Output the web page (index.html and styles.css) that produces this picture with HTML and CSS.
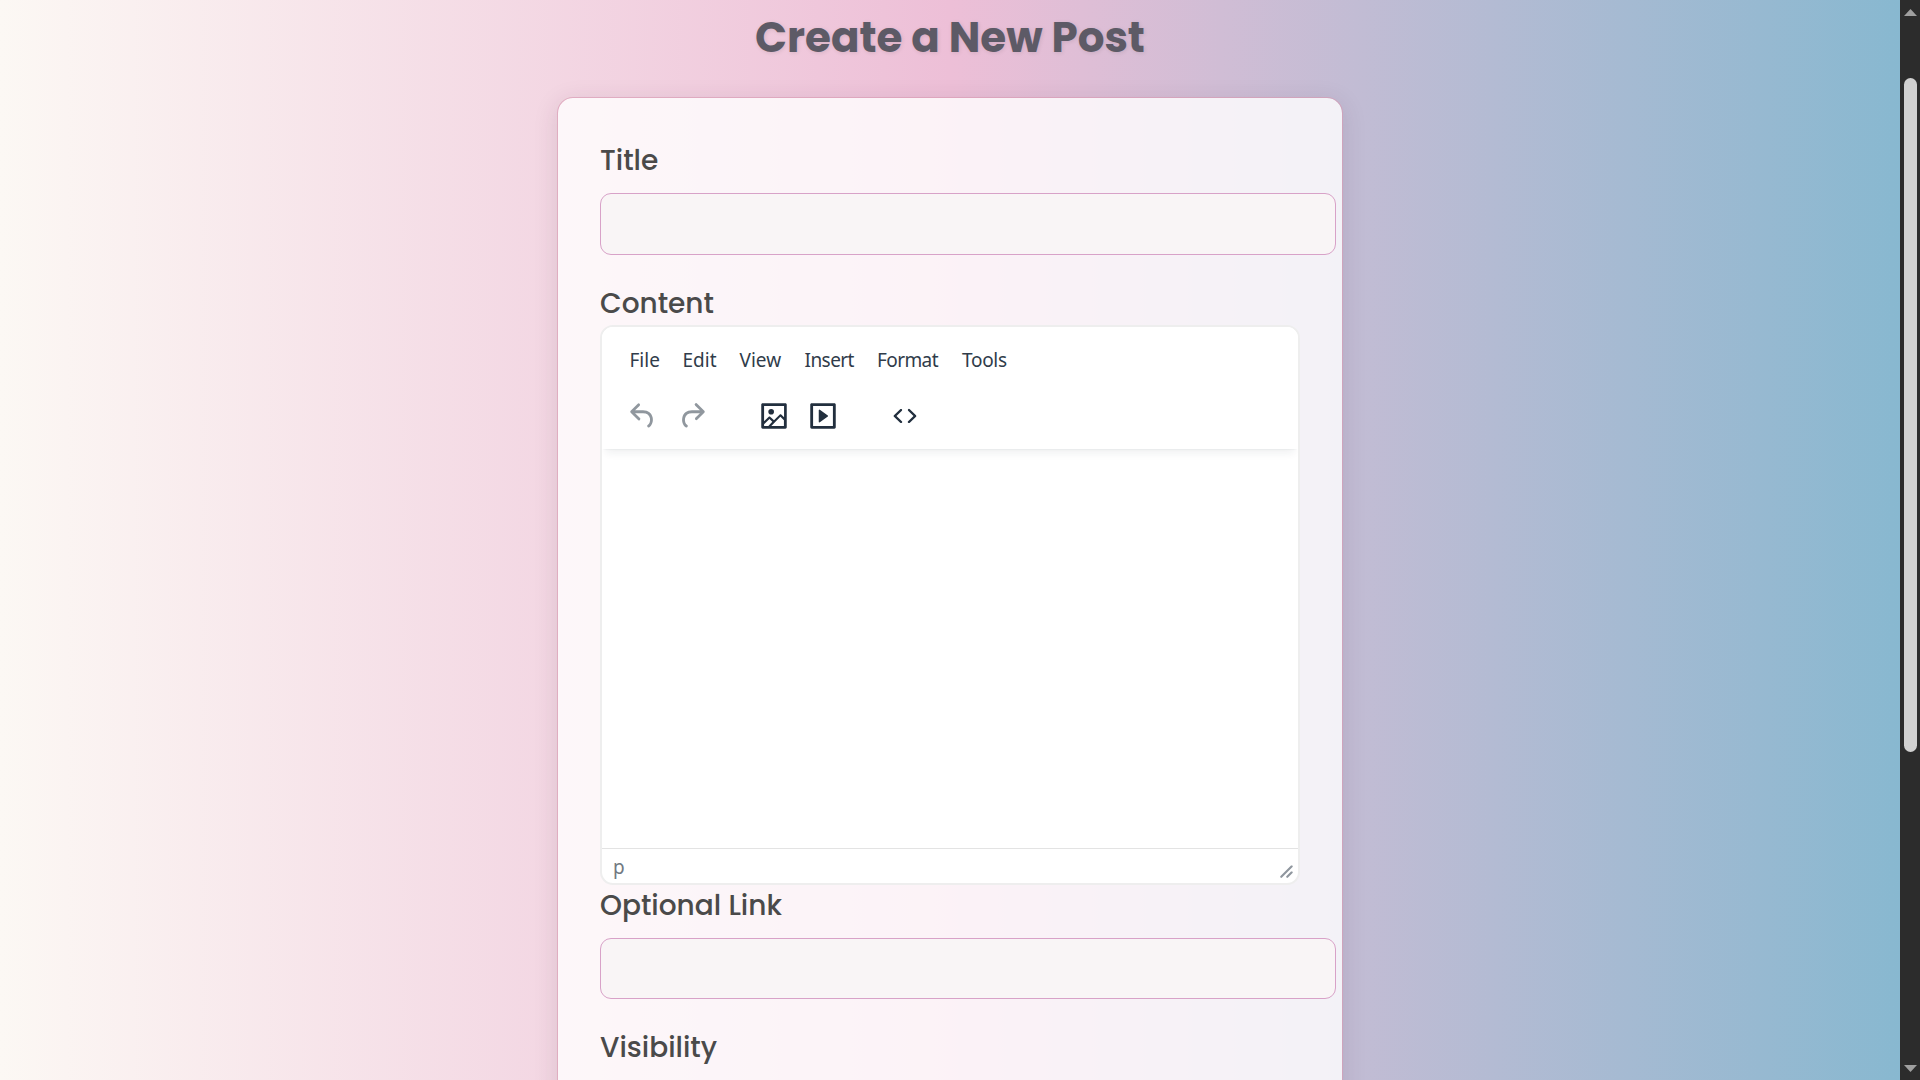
FILE: index.html
```html
<!DOCTYPE html>
<html lang="en">
<head>
<meta charset="utf-8">
<title>Create a New Post</title>
<link rel="stylesheet" href="styles.css">
</head>
<body>
<main class="page">
  <h1 class="heading">Create a New Post</h1>
  <form class="card">
    <label class="label label-title" for="title">Title</label>
    <input class="input" id="title" type="text">
    <label class="label label-content">Content</label>
    <div class="editor">
      <div class="editor-header">
        <nav class="menubar">
          <span class="file">File</span><span class="edit">Edit</span><span class="view">View</span><span class="insert">Insert</span><span class="format">Format</span><span class="tools">Tools</span>
        </nav>
        <div class="toolbar">
          <div class="group">
            <span class="tool disabled"><svg viewBox="0 0 24 24"><path d="M6.4 8H12c3.7 0 6.2 2 6.8 5.1.6 2.7-.4 5.6-2.3 6.8a1 1 0 0 1-1-1.8c1.1-.6 1.8-2.7 1.4-4.6-.5-2.1-2.1-3.5-4.9-3.5H6.4l3.3 3.3a1 1 0 1 1-1.4 1.4l-5-5a1 1 0 0 1 0-1.4l5-5a1 1 0 0 1 1.4 1.4L6.4 8Z"/></svg></span>
            <span class="tool disabled"><svg viewBox="0 0 24 24"><path d="M17.6 10H12c-2.8 0-4.4 1.4-4.9 3.5-.4 2 .3 4 1.4 4.6a1 1 0 1 1-1 1.8c-2-1.2-2.9-4.1-2.3-6.8.6-3 3-5.1 6.8-5.1h5.6l-3.3-3.3a1 1 0 1 1 1.4-1.4l5 5a1 1 0 0 1 0 1.4l-5 5a1 1 0 0 1-1.4-1.4l3.3-3.3Z"/></svg></span>
          </div>
          <div class="group">
            <span class="tool"><svg viewBox="0 0 24 24"><path fill-rule="evenodd" d="m5 15.7 3.3-3.2c.3-.3.7-.3 1 0L12 15l4.1-4c.3-.4.8-.4 1 0l2 1.9V5H5v10.7ZM5 18V19h3l2.8-2.9-2-2L5 17.9Zm14-3-2.5-2.4-6.4 6.5H19v-4ZM4 3h16c.6 0 1 .4 1 1v16c0 .6-.4 1-1 1H4a1 1 0 0 1-1-1V4c0-.6.4-1 1-1Zm6 8a2 2 0 1 0 0-4 2 2 0 0 0 0 4Z"/></svg></span>
            <span class="tool"><svg viewBox="0 0 24 24"><path fill-rule="evenodd" d="M4 3h16c.6 0 1 .4 1 1v16c0 .6-.4 1-1 1H4a1 1 0 0 1-1-1V4c0-.6.4-1 1-1Zm1 2v14h14V5H5Zm4.8 2.6 5.6 4a.5.5 0 0 1 0 .8l-5.6 4A.5.5 0 0 1 9 16V8a.5.5 0 0 1 .8-.4Z"/></svg></span>
          </div>
          <div class="group">
            <span class="tool"><svg viewBox="0 0 24 24"><path d="M9.8 15.7c.3.3.3.8 0 1-.3.4-.9.4-1.2 0l-4.4-4.1a.8.8 0 0 1 0-1.2l4.4-4.2c.3-.3.9-.3 1.2 0 .3.3.3.8 0 1.1L6 12l3.8 3.7ZM14.2 15.7c-.3.3-.3.8 0 1 .4.4.9.4 1.2 0l4.4-4.1c.3-.3.3-.8 0-1.2l-4.4-4.2a.8.8 0 0 0-1.2 0c-.3.3-.3.8 0 1.1L18 12l-3.8 3.7Z"/></svg></span>
          </div>
        </div>
      </div>
      <div class="editor-body"></div>
      <div class="statusbar">
        <span>p</span>
        <svg class="resize" viewBox="0 0 10 10"><path d="M8.1 1.1A.5.5 0 1 1 9 2l-7 7A.5.5 0 1 1 1 8l7-7ZM8.1 5.1A.5.5 0 1 1 9 6l-3 3A.5.5 0 1 1 5 8l3-3Z"/></svg>
      </div>
    </div>
    <label class="label label-link" for="link">Optional Link</label>
    <input class="input input-link" id="link" type="text">
    <label class="label label-visibility">Visibility</label>
  </form>
</main>
<aside class="scrollbar">
  <svg class="arrow" viewBox="0 0 13 7"><path d="M6.5 0 13 7H0Z"/></svg>
  <div class="track"><div class="thumb"></div></div>
  <svg class="arrow" viewBox="0 0 13 7"><path d="M0 0H13L6.5 7Z"/></svg>
</aside>
</body>
</html>
```
FILE: styles.css
```css
* { box-sizing: border-box; }

body {
  margin: 0;
  height: 1080px;
  overflow: hidden;
  display: flex;
  font-family: Poppins, Inter, "Open Sans", sans-serif;
}

.page {
  flex: 1;
  display: flex;
  flex-direction: column;
  align-items: center;
  overflow: hidden;
  background: linear-gradient(90deg, #fcf8f4 0%, #edbfd7 50%, #88b8d0 100%);
}

.heading {
  margin: 0;
  height: 97px;
  flex: none;
  padding-top: 8px;
  font-size: 42px;
  line-height: 60px;
  font-weight: 700;
  white-space: nowrap;
  color: #5d5a66;
  text-shadow: 1px 1px 4px rgba(0, 0, 0, 0.1);
}

.card {
  width: 786px;
  height: 1200px;
  flex: none;
  display: flex;
  flex-direction: column;
  align-items: flex-start;
  padding: 42px 42px 0;
  border: 1px solid rgba(214, 150, 175, 0.65);
  border-radius: 16px;
  background: rgba(255, 255, 255, 0.8);
  background-clip: padding-box;
  box-shadow: 0 5px 25px rgba(60, 40, 60, 0.13);
}

.label {
  height: 42px;
  line-height: 42px;
  font-size: 28px;
  font-weight: 500;
  color: #4a4a4a;
  white-space: nowrap;
}

.label-content { line-height: 44px; }
.label-visibility { line-height: 46px; }

.input {
  width: 736px;
  height: 62px;
  margin: 11px 0 27px;
  border: 1px solid #d8a2c8;
  border-radius: 11px;
  background: #f9f5f6;
  outline: none;
}

.input-link { height: 61px; margin: 11px 0 26px; }

.editor {
  width: 700px;
  height: 560px;
  margin-top: 1px;
  display: flex;
  flex-direction: column;
  border: 2px solid #eee;
  border-radius: 13px;
  background: #fff;
  overflow: hidden;
  font-family: "Segoe UI", "Noto Sans", sans-serif;
  color: #222f3e;
}

.editor-header {
  height: 122px;
  flex: none;
  padding-left: 16.5px;
  background: #fff;
  box-shadow: 0 2px 2px -2px rgba(34, 47, 62, 0.1), 0 8px 8px -4px rgba(34, 47, 62, 0.07);
}

.menubar {
  display: flex;
  padding: 16px 0 0 11px;
  font-size: 19px;
  line-height: 34px;
  color: #303c4a;
}

.file { width: 53px; }
.edit { width: 57px; }
.view { width: 65px; }
.insert { width: 72.5px; letter-spacing: -0.55px; }
.format { width: 85px; letter-spacing: -0.6px; }
.tools { letter-spacing: -0.3px; }

.toolbar {
  display: flex;
  gap: 33px;
  padding-top: 14px;
}

.group { display: flex; }

.tool {
  width: 49px;
  height: 50px;
  display: grid;
  place-items: center;
}

.tool svg { width: 34px; height: 34px; fill: #222f3e; }
.disabled svg { fill: rgba(34, 47, 62, 0.5); }

.editor-body { flex: 1; }

.statusbar {
  height: 35px;
  flex: none;
  display: flex;
  justify-content: space-between;
  padding: 0 4px 0 11px;
  border-top: 1px solid #e3e3e3;
  font-size: 19px;
  line-height: 37px;
  color: #717982;
}

.resize { width: 15px; height: 15px; margin-top: 15px; fill: #8f969e; }

.scrollbar {
  width: 20px;
  flex: none;
  display: flex;
  flex-direction: column;
  padding: 9px 3px 8px 4px;
  background: #2c2c2c;
}

.arrow { width: 13px; height: 7px; fill: #9f9f9f; }

.track { flex: 1; padding-top: 62px; }

.thumb { height: 674px; border-radius: 6.5px; background: #d1d1d1; }
```
